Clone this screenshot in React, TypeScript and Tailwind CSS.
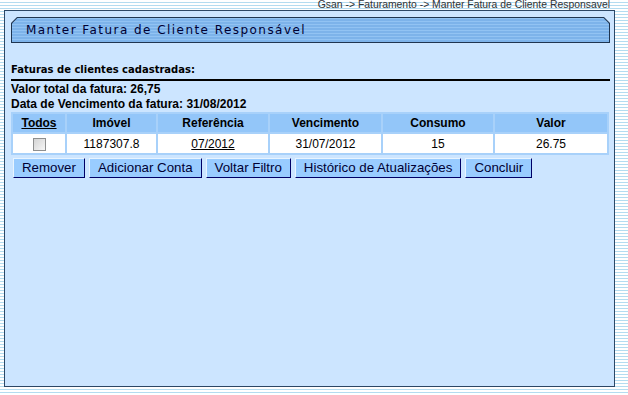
import React from "react";

const arial = { fontFamily: '"Liberation Sans", Arial, sans-serif' };
const verdana = { fontFamily: '"DejaVu Sans", Verdana, sans-serif' };

function Btn({ children }: { children: React.ReactNode }) {
  return (
    <button
      className="h-[20px] px-[8px] text-[13.3px] leading-[16px] text-[#000033] bg-[#99ccff] border border-t-[#e8f4ff] border-l-[#e8f4ff] border-r-[#000066] border-b-[#000066]"
      style={arial}
    >
      {children}
    </button>
  );
}

export default function App() {
  return (
    <div
      className="w-[628px] h-[395px] flex flex-col pl-[4px] bg-[repeating-linear-gradient(to_bottom,#ffffff_0px,#ffffff_2px,#b4dcf0_2px,#b4dcf0_3px)]"
    >
      <div
        className="h-[10px] text-right pr-[18px] text-[10.4px] leading-[10px] text-[#333333] whitespace-nowrap"
        style={arial}
      >
        Gsan -&gt; Faturamento -&gt; Manter Fatura de Cliente Responsavel
      </div>
      <div className="w-[611px] h-[377px] border border-[#2b4766] bg-[#cce5ff] pl-[6px] pr-[4px] pt-[6px] flex flex-col">
        <div className="h-[26px] bg-[#1f3550] p-[1px] [clip-path:polygon(6px_0,calc(100%-6px)_0,100%_6px,100%_100%,0_100%,0_6px)]">
          <div className="h-full flex items-center pl-[14px] bg-[repeating-linear-gradient(to_bottom,#92c3f3_0px,#92c3f3_1px,#7db3ea_1px,#7db3ea_3px)] [clip-path:polygon(5.5px_0,calc(100%-5.5px)_0,100%_5.5px,100%_100%,0_100%,0_5.5px)]">
            <span
              className="text-[12px] tracking-[1.45px] text-[#000033]"
              style={verdana}
            >
              Manter Fatura de Cliente Responsável
            </span>
          </div>
        </div>
        <div
          className="mt-[20px] text-[10px] leading-[14px] font-bold text-[#000000]"
          style={verdana}
        >
          Faturas de clientes cadastradas:
        </div>
        <div className="mt-[2px] h-[2px] bg-black" />
        <div className="text-[12px] leading-[15px] font-bold text-black mt-[1px]" style={arial}>
          <div>Valor total da fatura: 26,75</div>
          <div>Data de Vencimento da fatura: 31/08/2012</div>
        </div>
        <table
          className="w-[598px] table-fixed border-separate border-spacing-[2px] bg-[#a8d1fa] text-[12px] text-black"
          style={arial}
        >
          <colgroup>
            <col className="w-[52px]" />
            <col className="w-[89px]" />
            <col className="w-[110px]" />
            <col className="w-[111px]" />
            <col className="w-[110px]" />
            <col className="w-[112px]" />
          </colgroup>
          <thead>
            <tr className="h-[18px]">
              <th className="bg-[#93c6f9] font-bold p-0 leading-[14px] underline">Todos</th>
              <th className="bg-[#93c6f9] font-bold p-0 leading-[14px]">Imóvel</th>
              <th className="bg-[#93c6f9] font-bold p-0 leading-[14px]">Referência</th>
              <th className="bg-[#93c6f9] font-bold p-0 leading-[14px]">Vencimento</th>
              <th className="bg-[#93c6f9] font-bold p-0 leading-[14px]">Consumo</th>
              <th className="bg-[#93c6f9] font-bold p-0 leading-[14px]">Valor</th>
            </tr>
          </thead>
          <tbody>
            <tr className="h-[19px]">
              <td className="bg-white p-0 text-center align-middle">
                <span className="inline-block align-middle w-[13px] h-[13px] border border-[#8e8f8f] bg-[linear-gradient(135deg,#d4d4d4,#f6f6f6)]" />
              </td>
              <td className="bg-white p-0 text-center">1187307.8</td>
              <td className="bg-white p-0 text-center underline">07/2012</td>
              <td className="bg-white p-0 text-center">31/07/2012</td>
              <td className="bg-white p-0 text-center">15</td>
              <td className="bg-white p-0 text-center">26.75</td>
            </tr>
          </tbody>
        </table>
        <div className="mt-[3px] ml-[2px] flex gap-[4px]">
          <Btn>Remover</Btn>
          <Btn>Adicionar Conta</Btn>
          <Btn>Voltar Filtro</Btn>
          <Btn>Histórico de Atualizações</Btn>
          <Btn>Concluir</Btn>
        </div>
      </div>
    </div>
  );
}
